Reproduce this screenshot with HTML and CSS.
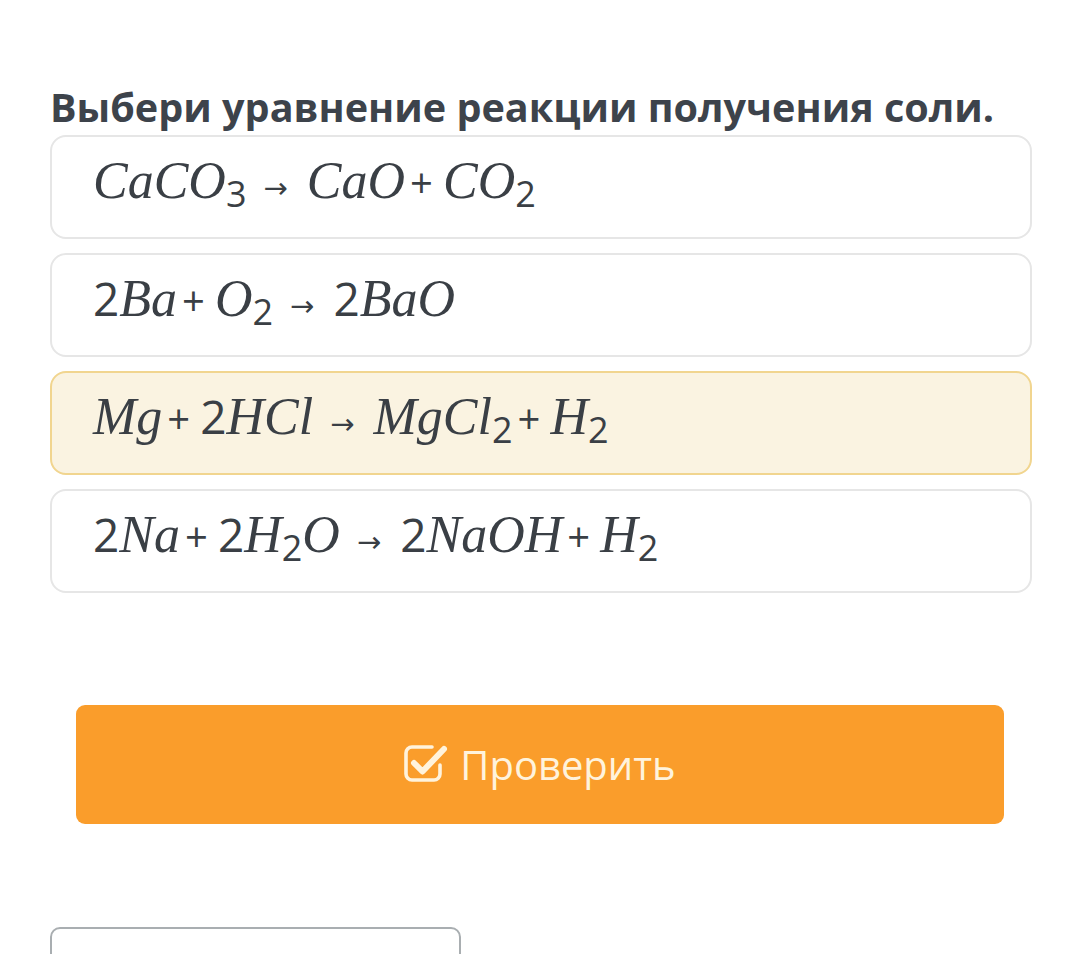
FILE: index.html
```html
<!DOCTYPE html>
<html lang="ru">
<head>
  <meta charset="UTF-8">
  <title>Выбери уравнение</title>
  <link rel="stylesheet" href="styles.css">
</head>
<body>
  <div class="task">
    <h1>Выбери уравнение реакции получения соли.</h1>

    <!-- варианты ответа -->
    <div class="options">
      <div class="option">
        <span class="eq"><i>CaCO</i><sub>3</sub><span class="arr">→</span><i>CaO</i><span class="op">+</span><i>CO</i><sub>2</sub></span>
      </div>
      <div class="option">
        <span class="eq"><b>2</b><i>Ba</i><span class="op">+</span><i>O</i><sub>2</sub><span class="arr">→</span><b>2</b><i>BaO</i></span>
      </div>
      <div class="option selected">
        <span class="eq"><i>Mg</i><span class="op">+</span><b>2</b><i>HCl</i><span class="arr">→</span><i>MgCl</i><sub>2</sub><span class="op">+</span><i>H</i><sub>2</sub></span>
      </div>
      <div class="option">
        <span class="eq"><b>2</b><i>Na</i><span class="op">+</span><b>2</b><i>H</i><sub>2</sub><i>O</i><span class="arr">→</span><b>2</b><i>NaOH</i><span class="op">+</span><i>H</i><sub>2</sub></span>
      </div>
    </div>

    <button class="check">
      <svg width="44" height="40" viewBox="0 0 44 40" fill="none" stroke="currentColor" stroke-linecap="round" stroke-linejoin="round">
        <path d="M36 22v9a6 6 0 0 1-6 6H8a6 6 0 0 1-6-6V10a6 6 0 0 1 6-6h20" stroke-width="3.6"/>
        <path d="M10 20l8.5 8.5L40 6" stroke-width="6"/>
      </svg>
      <span>Проверить</span>
    </button>

    <div class="next"></div>
  </div>
</body>
</html>
```
FILE: styles.css
```css
body {
  margin: 0;
  background: #fff;
  font-family: "Open Sans", "Noto Sans", sans-serif;
  color: #3c424a;
}
.task {
  width: 982px;
  padding: 79px 0 0 50px;
}
h1 {
  margin: 0;
  font-size: 39.6px;
  font-weight: 700;
  line-height: 56px;
  color: #3d434b;
}
.options {
  display: flex;
  flex-direction: column;
  gap: 14px;
}
.option {
  height: 100px;
  box-sizing: content-box;
  border: 2px solid #e6e6e6;
  border-radius: 16px;
  padding: 0 0 0 41px;
  display: flex;
  align-items: center;
}
.option > .eq {
  margin-bottom: 16px;
}
.option.selected {
  background: #faf3e1;
  border-color: #f1d58f;
}
.eq {
  font-size: 52px;
  line-height: 1;
  white-space: nowrap;
  color: #3a3f45;
}
.eq i {
  font-family: "Liberation Serif", serif;
  font-style: italic;
}
.eq b {
  font-family: "Open Sans", sans-serif;
  font-weight: 400;
  font-size: 46px;
}
.eq sub {
  font-family: "Open Sans", sans-serif;
  font-size: 36px;
  vertical-align: -9px;
  line-height: 0;
}
.op {
  font-family: "Open Sans", sans-serif;
  font-size: 40px;
  margin: 0 10px 0 5px;
}
.arr {
  font-family: "DejaVu Sans", sans-serif;
  font-size: 29px;
  margin: 0 19px 0 17px;
}
.check {
  margin: 112px 0 0 26px;
  width: 928px;
  height: 119px;
  border: none;
  border-radius: 9px;
  background: #fa9d2b;
  color: #fff3dc;
  font-family: "Open Sans", sans-serif;
  font-size: 40px;
  display: flex;
  align-items: center;
  justify-content: center;
  gap: 12px;
  cursor: pointer;
}
.check svg {
  margin-top: -4px;
}
.next {
  margin-top: 103px;
  width: 407px;
  height: 60px;
  border: 2px solid #a9aeb1;
  border-radius: 10px;
}
```
